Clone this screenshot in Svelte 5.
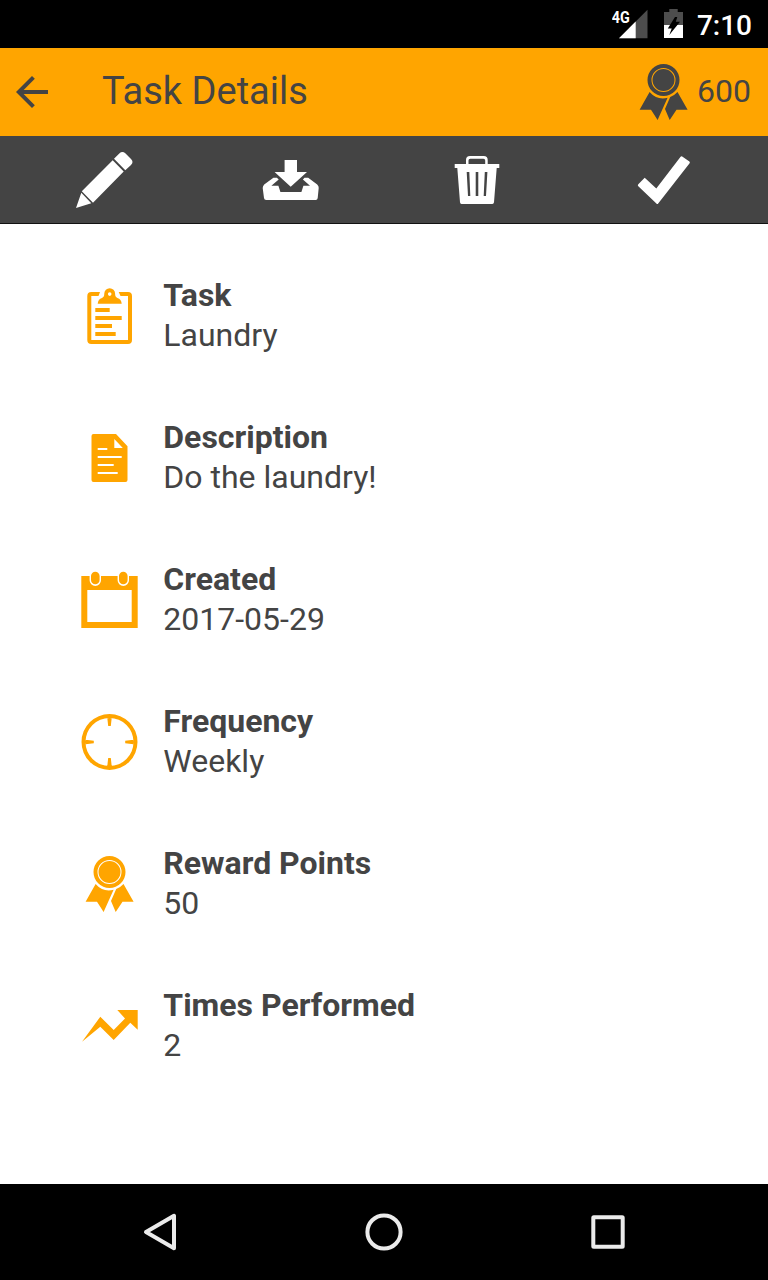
<script>
  export let points = 600;

  const details = [
    { icon: 'clipboard', label: 'Task', value: 'Laundry' },
    { icon: 'document', label: 'Description', value: 'Do the laundry!' },
    { icon: 'calendar', label: 'Created', value: '2017-05-29' },
    { icon: 'clock', label: 'Frequency', value: 'Weekly' },
    { icon: 'award', label: 'Reward Points', value: '50' },
    { icon: 'trend', label: 'Times Performed', value: '2' },
  ];

  const actions = [
    { icon: 'pencil', label: 'Edit' },
    { icon: 'download', label: 'Save' },
    { icon: 'trash', label: 'Delete' },
    { icon: 'check', label: 'Complete' },
  ];

  // filled shapes on a 64x64 grid
  const icons = {
    clipboard:
      'M22 8H13.3Q9.3 8 9.3 12V56Q9.3 60 13.3 60H50Q54 60 54 56V12Q54 8 50 8H40.7L42.5 12H50V56H13.3V12H20.5Z ' +
      'M19.7 19.8Q20 15 24 14Q26.3 13.2 26.3 9.6A5.4 5.4 0 0 1 37.1 9.6Q37.1 13.2 39.4 14Q43.4 15 43.7 19.8Z M31.7 8.3A1.8 1.8 0 1 0 31.7 11.9A1.8 1.8 0 1 0 31.7 8.3Z ' +
      'M17.3 24H31.7V28H17.3Z M17.3 32H43.7V36H17.3Z M17.3 40H34V44H17.3Z M17.3 48H37.7V52H17.3Z',
    document:
      'M15.5 8H38L49.5 20.3V54Q49.5 56 47.5 56H15.5Q13.5 56 13.5 54V10Q13.5 8 15.5 8Z M36.3 13V22H44.8Z ' +
      'M19.7 22V24H29.3V22Z M19.7 30V32H43.7V30Z M19.7 38V40H35.7V38Z M19.7 46V48H39.7V46Z',
    calendar:
      'M3.3 8H11.6V12.3A5.7 5.7 0 0 0 23 12.3V8H39.6V12.3A5.7 5.7 0 0 0 51 12.3V8H59.7V60H3.3Z M9.3 22V54H53.7V22Z ' +
      'M13 8A4.3 4.3 0 0 1 21.6 8V12A4.3 4.3 0 0 1 13 12Z M41 8A4.3 4.3 0 0 1 49.6 8V12A4.3 4.3 0 0 1 41 12Z',
    clock:
      'M31.5 4A28 28 0 1 0 31.5 60A28 28 0 1 0 31.5 4Z M31.5 8A24 24 0 1 1 31.5 56A24 24 0 1 1 31.5 8Z ' +
      'M29.3 8.05H33.7L32.8 16H30.2Z M29.3 55.95H33.7L32.8 48H30.2Z M7.55 29.8V34.2L15.8 33.2V30.8Z M55.45 29.8V34.2L47.2 33.2V30.8Z',
    award:
      'M31.5 4A16 16 0 1 0 31.5 36A16 16 0 1 0 31.5 4Z M31.5 8A12 12 0 1 1 31.5 32A12 12 0 1 1 31.5 8Z ' +
      'M31.5 9A11 11 0 1 0 31.5 31A11 11 0 1 0 31.5 9Z ' +
      'M17.6 32A18.2 18.2 0 0 0 35.6 37.8L25.6 60L19 49.8H7.6Z M38.2 37A18.2 18.2 0 0 0 45.5 32L55.6 49.8H44.5L37.7 60L33 49Z',
    trend:
      'M4 47.8L22.3 22.7L35.7 36L47 24.5L39.3 16H59.7V35.8L52.3 28.7L35.7 46L22.3 32.7Z',
    pencil:
      'M4 60L9.3 44.7L19.3 55.3Z M9.8 43.3L40.7 12.3L51.7 23.5L21 54.7Z M42 10.8L47.3 5.5Q50.3 2.7 53.3 5.3L59 11Q62 14 59 17L53.3 22.3Z',
    download:
      'M25.6 12H38V24H48L31.7 38.7L15.6 24H25.6Z ' +
      'M14.4 29.8H17.9L19.7 31.5L12.4 37.7H19.4L21.4 44H42.4L44.4 37.7H51L43.9 31.5L45.5 29.8H49.2L58.2 36.5Q59.9 38 59.7 40L58.7 50Q58.5 52 56.7 52H7.2Q5.2 52 5 50L3.7 40Q3.7 38 5.2 36.5Z',
    trash:
      'M9.7 16H21V12Q21 8 25 8H38.7Q42.7 8 42.7 12V16H54.3V20H51.7L49 54.3Q48.8 56 47.3 56H16.5Q15.2 56 15 54.3L12.3 20H9.7Z ' +
      'M23.5 16H40.2V12.5Q40.2 10.7 38.4 10.7H25.3Q23.5 10.7 23.5 12.5Z ' +
      'M21.7 24L23 48H25.3L24.3 24Z M30.7 24V48H33.3V24Z M39.8 24L38.7 48H41L42.4 24Z',
    check:
      'M6.3 36.3L12.7 29.8L24.3 40.5L48.6 8.7Q49.3 7.8 50.2 8.5L57.4 13.6Q58.3 14.3 57.6 15.2L26.2 55.4Q25.3 56.5 24.4 55.4L6.3 38.2Q5.3 37.3 6.3 36.3Z',
  };
</script>

<div class="screen">
  <div class="status">
    <svg class="signal" width="36" height="48" viewBox="0 0 36 48">
      <path d="M35.5 9.7V38.3H7Z" fill="#4d4d4d" />
      <path d="M23.7 21.6V38.3H7Z" fill="#fff" />
      <text x="-0.3" y="22.7" textLength="18" lengthAdjust="spacingAndGlyphs">4G</text>
    </svg>
    <svg width="19" height="48" viewBox="0 0 19 48">
      <path d="M5.3 9H13.7V12H19V38H0V12H5.3Z" fill="#4d4d4d" />
      <path d="M0 25H19V38H0Z" fill="#fff" />
      <path d="M11 17L3.8 28.6H7.7L5.3 35L16 21.8H11.8L13.3 17Z" fill="#000" />
    </svg>
    <span class="time">7:10</span>
  </div>

  <header>
    <button class="back" type="button" aria-label="Back">
      <svg width="48" height="48" viewBox="0 0 24 24">
        <path d="M20 11H7.83l5.59-5.59L12 4l-8 8 8 8 1.41-1.41L7.83 13H20v-2z" />
      </svg>
    </button>
    <h1>Task Details</h1>
    <div class="points">
      <svg class="icon" viewBox="0 0 64 64"><path d={icons.award} /></svg>
      <span>{points}</span>
    </div>
  </header>

  <div class="toolbar">
    {#each actions as action}
      <button type="button" aria-label={action.label}>
        <svg class="icon" viewBox="0 0 64 64"><path d={icons[action.icon]} /></svg>
      </button>
    {/each}
  </div>

  <main>
    {#each details as item}
      <div class="row">
        <svg class="icon" viewBox="0 0 64 64"><path d={icons[item.icon]} /></svg>
        <div class="text">
          <strong>{item.label}</strong>
          <span>{item.value}</span>
        </div>
      </div>
    {/each}
  </main>

  <nav>
    <svg width="48" height="48" viewBox="0 0 48 48"><path d="M10 24L38 7.8V40.2Z" /></svg>
    <svg width="48" height="48" viewBox="0 0 48 48"><circle cx="24" cy="24" r="16.6" /></svg>
    <svg width="48" height="48" viewBox="0 0 48 48"><rect x="9.3" y="9.3" width="29.4" height="29.4" rx="0.5" /></svg>
  </nav>
</div>

<style>
  :global(body) { margin: 0; }

  .screen {
    display: flex;
    flex-direction: column;
    width: 768px;
    height: 1280px;
    background: #fff;
    color: #444;
    font-family: Roboto, sans-serif;
    overflow: hidden;
  }

  button {
    display: flex;
    align-items: center;
    justify-content: center;
    padding: 0;
    border: none;
    background: none;
    color: inherit;
    cursor: pointer;
  }

  svg { display: block; flex-shrink: 0; }

  .icon {
    width: 64px;
    height: 64px;
    fill: currentColor;
    fill-rule: evenodd;
  }

  .status {
    display: flex;
    align-items: center;
    justify-content: flex-end;
    height: 48px;
    padding-right: 16px;
    background: #000;
    color: #fff;
  }
  .signal { margin-right: 16px; }
  .signal text {
    font-size: 16.5px;
    font-weight: 700;
    fill: #fff;
  }
  .time {
    margin-left: 14px;
    padding-top: 4px;
    font-size: 28px;
    font-weight: 500;
    line-height: 46px;
  }

  header {
    display: flex;
    align-items: center;
    height: 88px;
    padding: 0 17px 0 8px;
    background: #ffa500;
  }
  .back svg { fill: currentColor; }
  h1 {
    flex: 1;
    margin: 0 0 0 46px;
    padding-bottom: 2px;
    font-size: 38px;
    font-weight: 400;
    line-height: 48px;
  }
  .points {
    display: flex;
    align-items: center;
    gap: 1.5px;
    font-size: 32px;
  }
  .points span { padding-bottom: 2px; }

  .toolbar {
    display: grid;
    grid-template-columns: repeat(4, 1fr);
    height: 88px;
    padding: 0 10.67px;
    box-sizing: border-box;
    background: #444;
    box-shadow: inset 0 -1px #111;
    color: #fff;
  }

  main {
    flex: 1;
    padding: 21px 0 0 78px;
  }
  .row {
    display: flex;
    align-items: center;
    gap: 21.3px;
    height: 142px;
  }
  .row .icon { color: #ffa500; }
  .text {
    display: flex;
    flex-direction: column;
    padding-bottom: 2px;
    font-size: 32px;
    line-height: 40px;
  }
  .text strong { font-weight: 700; }

  nav {
    display: grid;
    grid-template-columns: repeat(3, 224px);
    justify-content: center;
    place-items: center;
    height: 96px;
    background: #000;
  }
  nav svg {
    fill: none;
    stroke: #ebebeb;
    stroke-width: 4;
    stroke-linejoin: round;
  }
</style>
